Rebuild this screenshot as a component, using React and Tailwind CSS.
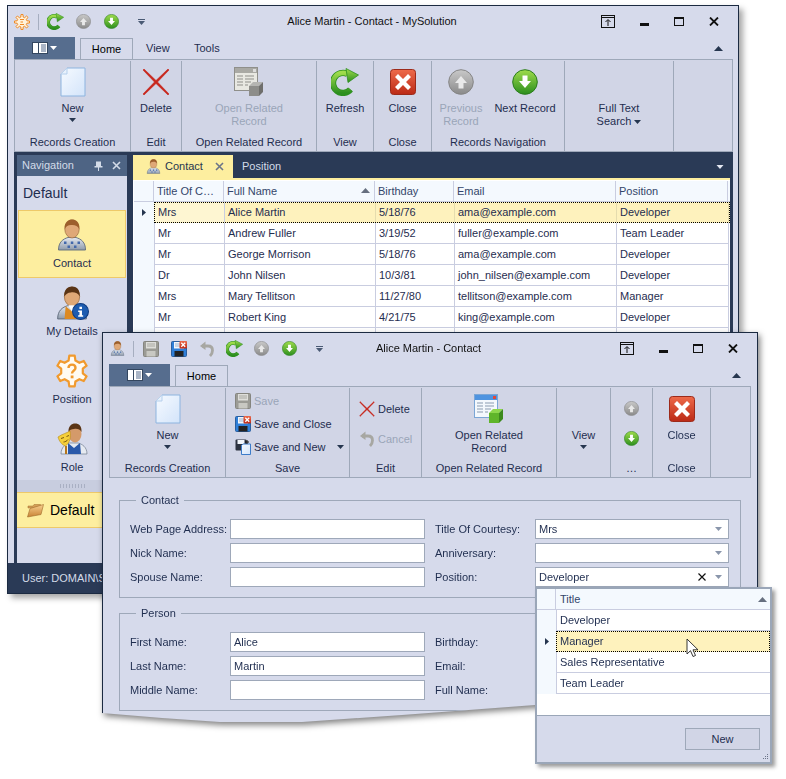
const GRID_COLS = [
  { title: 'Title Of C…', w: 'w-[70px]' },
  { title: 'Full Name', w: 'w-[151px]', sort: true },
  { title: 'Birthday', w: 'w-[79px]' },
  { title: 'Email', w: 'w-[162px]' },
  { title: 'Position', w: 'w-[112px]' },
];

const GRID_ROWS = [
  ['Mrs', 'Alice Martin', '5/18/76', 'ama@example.com', 'Developer'],
  ['Mr', 'Andrew Fuller', '3/19/52', 'fuller@example.com', 'Team Leader'],
  ['Mr', 'George Morrison', '5/18/76', 'ama@example.com', 'Developer'],
  ['Dr', 'John Nilsen', '10/3/81', 'john_nilsen@example.com', 'Developer'],
  ['Mrs', 'Mary Tellitson', '11/27/80', 'tellitson@example.com', 'Manager'],
  ['Mr', 'Robert King', '4/21/75', 'king@example.com', 'Developer'],
  ['Mr', 'Steven Buchanan', '3/4/55', 'buchanan@example.com', 'Manager'],
];

function gearPath(cx, cy, outer, inner, teeth) {
  const pts = [];
  const step = (Math.PI * 2) / teeth;
  for (let i = 0; i < teeth; i++) {
    const a = i * step - Math.PI / 2;
    [[-0.3, inner], [-0.17, outer], [0.17, outer], [0.3, inner]].forEach(([f, r]) => {
      pts.push(`${(cx + Math.cos(a + f * step) * r).toFixed(1)} ${(cy + Math.sin(a + f * step) * r).toFixed(1)}`);
    });
  }
  return 'M' + pts.join('L') + 'Z';
}

function Defs() {
  return (
    <svg className="absolute w-0 h-0">
      <defs>
        <linearGradient id="doc" x1="0" y1="0" x2="1" y2="1"><stop offset="0" stopColor="#f6faff" /><stop offset="1" stopColor="#d3e4fa" /></linearGradient>
        <linearGradient id="green" x1="0" y1="0" x2="0" y2="1"><stop offset="0" stopColor="#9fdc4c" /><stop offset="1" stopColor="#2c8f1e" /></linearGradient>
        <linearGradient id="grey" x1="0" y1="0" x2="0" y2="1"><stop offset="0" stopColor="#c9c9c9" /><stop offset="1" stopColor="#8a8a8a" /></linearGradient>
        <linearGradient id="red" x1="0" y1="0" x2="0" y2="1"><stop offset="0" stopColor="#ee6a4a" /><stop offset="1" stopColor="#bb2a16" /></linearGradient>
        <linearGradient id="suit" x1="0" y1="0" x2="0" y2="1"><stop offset="0" stopColor="#e4e9f1" /><stop offset="1" stopColor="#8f9bab" /></linearGradient>
        <linearGradient id="folder" x1="0" y1="0" x2="0" y2="1"><stop offset="0" stopColor="#f8cf8e" /><stop offset="1" stopColor="#c98436" /></linearGradient>
      </defs>
    </svg>
  );
}

function Caret({ color = '#26364f', className = '', w = 7 }) {
  return (
    <svg width={w} height="4" viewBox="0 0 7 4" className={className}><polygon points="0,0 7,0 3.5,4" fill={color} /></svg>
  );
}

function CaretUp({ color = '#26364f', className = '' }) {
  return (
    <svg width="9" height="5" viewBox="0 0 9 5" className={className}><polygon points="0,5 9,5 4.5,0" fill={color} /></svg>
  );
}

function NewDoc() {
  return (
    <svg width="26" height="30" viewBox="0 0 26 30">
      <path d="M7 1H25V29H1V7Z" fill="url(#doc)" stroke="#8db4df" />
      <path d="M7 1V7H1" fill="#e8f1fc" stroke="#b5cfec" />
    </svg>
  );
}

function RedX({ size = 28 }) {
  return (
    <svg width={size} height={size} viewBox="0 0 28 28">
      <path d="M1 2L2 1L14 12.500L26 1L27 2L15.500 14L27 26L26 27L14 15.500L2 27L1 26L12.500 14Z" fill="#c8261c" stroke="#c8261c" strokeWidth="0.6" />
    </svg>
  );
}

function RelatedIcon({ color }) {
  const head = color ? '#4f94e0' : '#a9a9a4';
  const cube = color ? '#5fb52a' : '#8d8d8a';
  const cubeTop = color ? '#8dd84c' : '#b5b5b2';
  const cubeSide = color ? '#3c8a1c' : '#6f6f6c';
  return (
    <svg width="30" height="30" viewBox="0 0 30 30">
      <rect x="0.5" y="0.5" width="23" height="23" fill={color ? '#f4f8fd' : '#e8e8e2'} stroke={color ? '#7ba6d6' : '#8f8f8a'} />
      <rect x="1" y="1" width="22" height="5" fill={head} />
      <rect x="19" y="2" width="3" height="3" fill={color ? '#e0483a' : '#ddd'} />
      <path d="M3 9H9M11 9H20M3 12H9M11 12H20M3 15H9M11 15H17M3 18H9M11 18H14" stroke={color ? '#8a9bb0' : '#8f8f8a'} />
      <polygon points="15,19 19,15 29,15 25,19" fill={cubeTop} />
      <rect x="15" y="19" width="10" height="10" fill={cube} />
      <polygon points="25,19 29,15 29,25 25,29" fill={cubeSide} />
    </svg>
  );
}

function Refresh({ size = 28 }) {
  return (
    <svg width={size} height={size} viewBox="0 0 28 28">
      <path d="M19.5 21.5A10 10 0 1 1 16.5 6" fill="none" stroke="#2c8f1e" strokeWidth="6.4" />
      <path d="M19.5 21.5A10 10 0 1 1 16.5 6" fill="none" stroke="url(#green)" strokeWidth="4.6" />
      <polygon points="15,0.5 27.5,7 17,14.5" fill="url(#green)" stroke="#2c8f1e" strokeWidth="0.8" />
    </svg>
  );
}

function RoundArrow({ up, grey, size = 26 }) {
  return (
    <svg width={size} height={size} viewBox="0 0 26 26">
      <circle cx="13" cy="13" r="12.3" fill={grey ? 'url(#grey)' : 'url(#green)'} stroke={grey ? '#858585' : '#2b7d1d'} />
      <g transform={up ? 'rotate(180 13 13)' : undefined}>
        <path d="M10.5 6.5H15.5V12H19L13 19L7 12H10.5Z" fill={grey ? '#e9e9e9' : '#fff'} />
      </g>
    </svg>
  );
}

function CloseBox({ size = 26 }) {
  return (
    <svg width={size} height={size} viewBox="0 0 26 26">
      <rect x="0.5" y="0.5" width="25" height="25" rx="3" fill="url(#red)" stroke="#9c2a1a" />
      <path d="M5 8L8 5L13 10L18 5L21 8L16 13L21 18L18 21L13 16L8 21L5 18L10 13Z" fill="#fff" />
    </svg>
  );
}

function AppGear() {
  return (
    <svg width="16" height="16" viewBox="0 0 16 16">
      <path d={gearPath(8, 8, 7.6, 5, 8)} fill="#fff3dd" stroke="#f08a24" />
      <path d="M6 5.5H10M9 8H6.5M6 10.5H10" stroke="#f08a24" />
    </svg>
  );
}

function PositionGear() {
  return (
    <svg width="32" height="34" viewBox="0 0 32 34">
      <path d={gearPath(16, 17, 15.5, 11, 6)} fill="#fffbf2" stroke="#f19a2e" strokeWidth="2.2" strokeLinejoin="round" />
      <path d="M12.5 14C12.5 9.5 19.5 9.5 19.5 14C19.5 16.5 16 16.5 16 19.5" fill="none" stroke="#f19a2e" strokeWidth="2.4" />
      <rect x="14.7" y="21.5" width="2.8" height="2.8" fill="#f19a2e" />
    </svg>
  );
}

function PersonBase({ size, suit = 'url(#suit)', hair = '#9c5f2c', children }) {
  return (
    <svg width={size} height={size} viewBox="0 0 32 32">
      <path d="M2.500 31C2.500 23 7 20 12 18.500H20C25 20 29.500 23 29.500 31Z" fill={suit} stroke="#5f6b7c" strokeWidth="0.9" />
      <ellipse cx="16" cy="10" rx="7.200" ry="9" fill="#dfa877" stroke="#9c6a3c" strokeWidth="0.7" />
      <path d="M8.800 10C8 3 12.500 0.500 16 0.500C20 0.500 24 3 23.200 10C22 6.500 18 5.500 15 6C12 6 10 7.500 8.800 10Z" fill={hair} />
      {children}
    </svg>
  );
}

function ContactIcon({ size = 32 }) {
  return (
    <PersonBase size={size}>
      <path d="M8 22.500h2.500v2.500H8zM14.800 22.500h2.500v2.500h-2.500zM21.500 22.500h2.500v2.500H21.500zM11.500 26.500h2.500v2.500h-2.500zM18 26.500h2.500v2.500H18z" fill="#4268aa" />
    </PersonBase>
  );
}

function DetailsIcon() {
  return (
    <PersonBase size={34} hair="#5a3415">
      <path d="M10 19L16 24L22 19L23 31H9Z" fill="#dc8a22" />
      <path d="M12.500 18L16 24L19.500 18Z" fill="#fff" />
      <circle cx="24" cy="24" r="7.500" fill="#1d5cb0" stroke="#0f3c80" />
      <rect x="23" y="19.500" width="2.400" height="2.200" fill="#fff" />
      <path d="M21.800 23H25.400V27.500H26.500V29H21.800V27.500H23V24.500H21.800Z" fill="#fff" />
    </PersonBase>
  );
}

function RoleIcon() {
  return (
    <svg width="32" height="34" viewBox="0 0 32 34">
      <path d="M5 32C5 25 10 22 13 21H22C26 22 31 25 31 32Z" fill="#e6eaf1" stroke="#6f7b8c" strokeWidth="0.7" />
      <path d="M12 21L18 26L24 21L25 32H12Z" fill="#2a59aa" />
      <ellipse cx="19" cy="12" rx="6.500" ry="8.500" fill="#d49a6a" />
      <path d="M12.500 10C12 4 16 1.500 19 1.500C23 1.500 26 4 25.500 10C24 7 21 6.500 18 7C15.500 7 13.500 8 12.500 10Z" fill="#5a3415" />
      <path d="M2 15C6 12 11 11 14 9C15 15 14 21 9.500 24C6 23 3 19 2 15Z" fill="#f5cf3a" stroke="#b58a16" strokeWidth="0.6" />
      <path d="M5 16.500L8 15.500M10.500 14.500L13 13.500M7.500 20C9 20 11 19 12 17.500" stroke="#7a5a10" fill="none" />
      <rect x="9" y="24" width="2" height="8" fill="#b5761c" />
    </svg>
  );
}

function Folder() {
  return (
    <svg width="17" height="16" viewBox="0 0 17 16">
      <path d="M1 4H6L7 2.500H13.500V5L1 6Z" fill="#d5a058" stroke="#a06a28" strokeWidth="0.5" />
      <path d="M0.500 15L3 6.500L16.500 2.500L14 12.500Z" fill="url(#folder)" stroke="#a06a28" strokeWidth="0.6" />
    </svg>
  );
}

function Floppy({ tone = 'blue', children }) {
  const body = tone === 'blue' ? '#2f7fd8' : tone === 'dark' ? '#2d3340' : '#9b9b95';
  return (
    <svg width="16" height="16" viewBox="0 0 16 16">
      <rect x="0.500" y="0.500" width="15" height="15" rx="1" fill={body} stroke={tone === 'grey' ? '#85857f' : '#2a5f9f'} />
      <rect x="3" y="1" width="10" height="6.500" fill={tone === 'grey' ? '#dededa' : '#f2f6fb'} />
      <path d="M4 3H12M4 5H12" stroke={tone === 'grey' ? '#a8a8a2' : '#9bb3cf'} />
      <rect x="3.500" y="10" width="9" height="5.500" fill={tone === 'grey' ? '#c8c8c2' : '#222'} />
      {children}
    </svg>
  );
}

function SaveClose() {
  return (
    <Floppy>
      <rect x="8.500" y="0" width="7.500" height="7.500" rx="1" fill="url(#red)" />
      <path d="M10.300 1.800L14.200 5.700M14.200 1.800L10.300 5.700" stroke="#fff" strokeWidth="1.300" />
    </Floppy>
  );
}

function SaveNew() {
  return (
    <svg width="16" height="16" viewBox="0 0 16 16">
      <rect x="0.500" y="0.500" width="11" height="11" rx="1" fill="#2d3340" />
      <rect x="2.500" y="1" width="7" height="4" fill="#f2f6fb" />
      <path d="M8 5H15.500V15.500H6.500V6.500Z" fill="url(#doc)" stroke="#3d7cc9" />
      <path d="M12 1V5M10 3H14" stroke="#111" />
    </svg>
  );
}

function Undo({ size = 16 }) {
  return (
    <svg width={size} height={size} viewBox="0 0 16 16">
      <path d="M3 5H9C12 5 13.500 7 13.500 9.500C13.500 11.500 12.500 13.500 11 15" fill="none" stroke="#a7a7a2" strokeWidth="2.800" />
      <polygon points="6.500,0.500 1,5 6.500,9" fill="#a7a7a2" />
    </svg>
  );
}

function PinBox() {
  return (
    <svg width="14" height="13" viewBox="0 0 14 13">
      <rect x="0.500" y="0.500" width="13" height="12" fill="none" stroke="#111" />
      <path d="M1 2.500H13" stroke="#111" />
      <path d="M7 11V5M4.500 7L7 4.500L9.500 7" fill="none" stroke="#111" />
    </svg>
  );
}

function WindowButtons({ gapClass }) {
  return (
    <div className={`flex items-center ${gapClass}`}>
      <PinBox />
      <div className="w-[9px] h-[3px] bg-[#111] mt-[5px]" />
      <div className="w-[10px] h-[9px] border border-t-2 border-[#111]" />
      <svg width="10" height="9" viewBox="0 0 10 9"><path d="M1 0.500L9 8.500M9 0.500L1 8.500" stroke="#111" strokeWidth="1.800" /></svg>
    </div>
  );
}

function FileButton() {
  return (
    <div className="w-[61px] h-[22px] bg-[#566d8e] flex items-center justify-center gap-[2px]">
      <svg width="16" height="12" viewBox="0 0 16 12">
        <rect x="0.500" y="0.500" width="15" height="11" fill="#fff" stroke="#33465f" />
        <path d="M6.500 0.500V11.500" stroke="#33465f" />
        <path d="M9 3H14M9 5H14M9 7H14M9 9H14" stroke="#566d8e" />
      </svg>
      <Caret color="#fff" />
    </div>
  );
}

function Tab({ w, children }) {
  return (
    <div className={`${w} h-[22px] -mb-px z-10 border border-b-0 border-[#9ea8b9] bg-[#d6daeb] flex items-center justify-center text-black`}>{children}</div>
  );
}

function Group({ w, caption, children, last }) {
  return (
    <div className={`${w} h-full flex flex-col items-center my-px ${last ? '' : 'border-r border-[#9ea8b9]'}`}>
      <div className="flex-1 w-full flex items-start justify-center">{children}</div>
      <div className="h-[15px] mb-[2px] leading-[15px] whitespace-nowrap">{caption}</div>
    </div>
  );
}

function BigButton({ icon, lines, disabled, caret, w }) {
  return (
    <div className={`${w || ''} pt-[6px] flex flex-col items-center ${disabled ? 'text-[#9aa5b8]' : ''}`}>
      <div className="h-[30px] flex items-center justify-center">{icon}</div>
      <div className="mt-[5px] leading-[13px] text-center whitespace-nowrap">
        {lines.map((l) => <div key={l}>{l}</div>)}
      </div>
      {caret && <Caret className="mt-[3px]" />}
    </div>
  );
}

function SmallRow({ icon, label, disabled, caret, gap = 'gap-[3px]' }) {
  return (
    <div className={`flex items-center ${gap} ${disabled ? 'text-[#9aa5b8]' : ''} whitespace-nowrap h-[16px]`}>
      {icon}
      <span>{label}</span>
      {caret && <Caret className="ml-[8px]" />}
    </div>
  );
}

function MainRibbon() {
  return (
    <div className="h-[93px] ml-[6px] mr-[5px] border border-[#9ea8b9] bg-[#d1d5e6] flex">
      <Group w="w-[116px]" caption="Records Creation">
        <BigButton icon={<NewDoc />} lines={['New']} caret />
      </Group>
      <Group w="w-[51px]" caption="Edit">
        <BigButton icon={<RedX />} lines={['Delete']} />
      </Group>
      <Group w="w-[135px]" caption="Open Related Record">
        <BigButton icon={<RelatedIcon />} lines={['Open Related', 'Record']} disabled />
      </Group>
      <Group w="w-[57px]" caption="View">
        <BigButton icon={<Refresh />} lines={['Refresh']} />
      </Group>
      <Group w="w-[58px]" caption="Close">
        <BigButton icon={<CloseBox />} lines={['Close']} />
      </Group>
      <Group w="w-[133px]" caption="Records Navigation">
        <div className="flex gap-[12px]">
          <BigButton icon={<RoundArrow up grey />} lines={['Previous', 'Record']} disabled w="w-[42px]" />
          <BigButton icon={<RoundArrow />} lines={['Next Record']} w="w-[62px]" />
        </div>
      </Group>
      <Group w="w-[109px]" caption="">
        <div className="pt-[41px] leading-[13px] text-center">
          <div>Full Text</div>
          <div className="flex items-center gap-[3px]">Search <Caret /></div>
        </div>
      </Group>
      <Group w="flex-1" caption="" last />
    </div>
  );
}

function FormRibbon() {
  return (
    <div className="h-[92px] ml-[6px] mr-[6px] border border-[#9ea8b9] bg-[#d1d5e6] flex">
      <Group w="w-[116px]" caption="Records Creation">
        <BigButton icon={<NewDoc />} lines={['New']} caret />
      </Group>
      <Group w="w-[124px]" caption="Save">
        <div className="pt-[5px] flex flex-col gap-[7px] w-full pl-[9px]">
          <SmallRow icon={<Floppy tone="grey" />} label="Save" disabled />
          <SmallRow icon={<SaveClose />} label="Save and Close" />
          <SmallRow icon={<SaveNew />} label="Save and New" caret />
        </div>
      </Group>
      <Group w="w-[72px]" caption="Edit">
        <div className="pt-[13px] flex flex-col gap-[14px] w-full pl-[9px]">
          <SmallRow icon={<RedX size={16} />} label="Delete" />
          <SmallRow icon={<Undo />} label="Cancel" disabled />
        </div>
      </Group>
      <Group w="w-[135px]" caption="Open Related Record">
        <BigButton icon={<RelatedIcon color />} lines={['Open Related', 'Record']} />
      </Group>
      <Group w="w-[54px]" caption="">
        <BigButton icon={<span />} lines={['View']} caret />
      </Group>
      <Group w="w-[42px]" caption="…">
        <div className="pt-[13px] flex flex-col items-center gap-[15px]">
          <RoundArrow up grey size={15} />
          <RoundArrow size={15} />
        </div>
      </Group>
      <Group w="w-[58px]" caption="Close">
        <BigButton icon={<CloseBox />} lines={['Close']} />
      </Group>
      <Group w="flex-1" caption="" last />
    </div>
  );
}

function NavItem({ icon, label, active, h = 'h-[68px]' }) {
  return (
    <div className={`${h} flex flex-col items-center ${active ? 'mx-px border border-[#eec969] bg-[#fdee9f] pt-[7px]' : 'pt-[8px]'}`}>
      <div className="h-[34px] flex items-center justify-center">{icon}</div>
      <div className={active ? 'mt-[4px]' : 'mt-[4px]'}>{label}</div>
    </div>
  );
}

function NavPanel() {
  return (
    <div className="w-[110px] flex flex-col bg-[#d6daeb]">
      <div className="h-[21px] bg-[#4e6484] text-[#d3dbe8] flex items-center pl-[5px] pr-[6px] shrink-0">
        <span className="flex-1">Navigation</span>
        <svg width="9" height="10" viewBox="0 0 9 10" className="mr-[9px]"><path d="M2 0.500H7V5H8.500V6.500H5V10H4V6.500H0.500V5H2Z" fill="#d3dbe8" /></svg>
        <svg width="9" height="9" viewBox="0 0 9 9"><path d="M1 1L8 8M8 1L1 8" stroke="#d3dbe8" strokeWidth="1.600" /></svg>
      </div>
      <div className="h-[34px] pl-[6px] flex items-center text-[14px] shrink-0">Default</div>
      <NavItem icon={<ContactIcon />} label="Contact" active />
      <NavItem icon={<DetailsIcon />} label="My Details" />
      <NavItem icon={<PositionGear />} label="Position" />
      <NavItem icon={<RoleIcon />} label="Role" h="h-[66px]" />
      <div className="h-[12px] bg-[#c8cddf] flex items-center justify-center">
        <div className="w-[26px] h-[4px] bg-[radial-gradient(#8a93a8_0.7px,transparent_0.8px)] bg-[length:3px_2px]" />
      </div>
      <div className="h-[36px] border-y border-[#eec969] bg-[#fdee9f] flex items-center gap-[6px] pl-[10px] text-[14px] text-black">
        <Folder />
        Default
      </div>
    </div>
  );
}

function CellText({ children, w, className = '' }) {
  return (
    <div className={`${w} h-full border-r border-[#c9cde0] pl-[3px] flex items-center whitespace-nowrap overflow-hidden ${className}`}>{children}</div>
  );
}

function ContactGrid() {
  return (
    <div className="flex-1 mr-[3px] border-t-2 border-[#fdee9f] bg-white pt-[1px] pl-px overflow-hidden">
      <div className="flex h-[21px] bg-[#f4f9fe] border-b border-[#c9cde0] text-[#33466a]">
        <div className="w-[20px] border-r border-[#c9cde0]" />
        {GRID_COLS.map((c) => (
          <CellText key={c.title} w={c.w} className="relative">
            {c.title}
            {c.sort && <CaretUp color="#666f7f" className="absolute right-[4px] top-[7px]" />}
          </CellText>
        ))}
      </div>
      {GRID_ROWS.map((row, i) => (
        <div key={row[1]} className="flex h-[21px]">
          <div className="w-[20px] bg-[#f4f9fe] flex items-center justify-center">
            {i === 0 && <svg width="4" height="7" viewBox="0 0 4 7"><polygon points="0,0 4,3.500 0,7" fill="#26364f" /></svg>}
          </div>
          <div className={`flex ${i === 0 ? 'border border-dotted border-black bg-[#fef2bd] -mr-px' : 'border-b border-l border-[#c9cde0]'}`}>
            {row.map((v, j) => (
              <CellText key={j} w={GRID_COLS[j].w} className={i === 0 && j === 0 ? 'bg-[#fef6d2]' : i === 0 ? 'border-[#e5dcae]' : ''}>{v}</CellText>
            ))}
          </div>
        </div>
      ))}
    </div>
  );
}

function MainWindow() {
  return (
    <div className="absolute left-[7px] top-[5px] w-[732px] h-[589px] border border-[#1b2a41] bg-[#d6daeb] flex flex-col shadow-[4px_4px_6px_rgba(0,0,0,0.35)]">
      <div className="h-[31px] flex items-center shrink-0 relative">
        <div className="ml-[6px]"><AppGear /></div>
        <div className="ml-[8px] w-px h-[16px] bg-[#a6aec0]" />
        <div className="ml-[8px]"><Refresh size={17} /></div>
        <div className="ml-[12px]"><RoundArrow up grey size={15} /></div>
        <div className="ml-[13px]"><RoundArrow size={15} /></div>
        <div className="ml-[19px] flex flex-col gap-px items-center">
          <div className="w-[7px] h-px bg-[#4a5a74]" />
          <Caret color="#4a5a74" />
        </div>
        <div className="flex-1 text-center text-[#111] -ml-[2px]">Alice Martin - Contact - MySolution</div>
        <div className="mr-[19px]"><WindowButtons gapClass="gap-[25px]" /></div>
      </div>
      <div className="h-[22px] ml-[6px] mr-[5px] flex items-end shrink-0">
        <FileButton />
        <div className="ml-[5px]"><Tab w="w-[53px]">Home</Tab></div>
        <div className="ml-[13px] w-[22px] self-center text-center">View</div>
        <div className="ml-[26px] self-center">Tools</div>
        <CaretUp color="#26364f" className="ml-auto mr-[10px] self-center" />
      </div>
      <MainRibbon />
      <div className="flex-1 ml-[6px] mr-[5px] bg-[#2a3a56] pt-[3px] pl-[3px] flex gap-[6px] min-h-0">
        <NavPanel />
        <div className="flex-1 flex flex-col min-w-0">
          <div className="h-[23px] flex items-center shrink-0 text-[#d3dbe8]">
            <div className="w-[100px] h-full bg-[#fdee9f] text-[#26364f] flex items-center pl-[13px] gap-[4px]">
              <ContactIcon size={15} />
              <span className="flex-1">Contact</span>
              <svg width="9" height="9" viewBox="0 0 9 9" className="mr-[9px]"><path d="M1 1L8 8M8 1L1 8" stroke="#6b7488" strokeWidth="1.600" /></svg>
            </div>
            <span className="ml-[9px] flex-1">Position</span>
            <Caret color="#e4e8f2" w={8} className="mr-[9px]" />
          </div>
          <ContactGrid />
        </div>
      </div>
      <div className="h-[30px] bg-[#2a3a56] text-[#d3dbe8] flex items-center pl-[14px] shrink-0">User: DOMAIN\Sam</div>
    </div>
  );
}

function Input({ value, combo, clear }) {
  return (
    <div className={`${combo ? 'w-[194px]' : 'w-[195px]'} h-[20px] border border-[#9ea8b9] bg-white flex items-center pl-[3px] pr-[6px] text-[#1f2d4f]`}>
      <span className="flex-1">{value}</span>
      {clear && <svg width="8" height="8" viewBox="0 0 8 8" className="mr-[9px]"><path d="M0.500 0.500L7.500 7.500M7.500 0.500L0.500 7.500" stroke="#111" strokeWidth="1.200" /></svg>}
      {combo && <Caret color="#8a96ab" />}
    </div>
  );
}

function FormRow({ left, leftValue, right, rightValue, combo, clear }) {
  return (
    <div className="flex items-center h-[20px]">
      <div className="w-[100px] whitespace-nowrap">{left}</div>
      <Input value={leftValue} />
      <div className="w-[100px] ml-[10px] whitespace-nowrap">{right}</div>
      <Input value={rightValue} combo={combo} clear={clear} />
    </div>
  );
}

function GroupBox({ title, children }) {
  return (
    <fieldset className="border border-[#9ea8b9] pl-[10px] pr-[10px] pt-[11px] pb-[10px] flex flex-col gap-[4px]">
      <legend className="ml-[6px] px-[5px] leading-[15px]">{title}</legend>
      <div className="flex flex-col gap-[4px]">{children}</div>
    </fieldset>
  );
}

function ContactWindow() {
  return (
    <div className="absolute left-[102px] top-[332px] drop-shadow-[2px_3px_3px_rgba(0,0,0,0.5)]">
      <div className="w-[656px] h-[390px] border-x border-t border-[#1b2a41] bg-[#d6daeb] flex flex-col overflow-hidden [clip-path:polygon(0_0,656px_0,656px_371px,433px_373px,300px_383px,200px_390px,118px_390px,60px_386px,0_381px)]">
        <div className="h-[31px] flex items-center shrink-0">
          <div className="ml-[7px]"><ContactIcon size={15} /></div>
          <div className="ml-[8px] w-px h-[16px] bg-[#a6aec0]" />
          <div className="ml-[9px]"><Floppy tone="grey" /></div>
          <div className="ml-[12px]"><SaveClose /></div>
          <div className="ml-[12px]"><Undo /></div>
          <div className="ml-[11px]"><Refresh size={17} /></div>
          <div className="ml-[11px]"><RoundArrow up grey size={15} /></div>
          <div className="ml-[13px]"><RoundArrow size={15} /></div>
          <div className="ml-[19px] flex flex-col gap-px items-center">
            <div className="w-[7px] h-px bg-[#4a5a74]" />
            <Caret color="#4a5a74" />
          </div>
          <div className="flex-1 text-center text-[#111] -ml-[86px]">Alice Martin - Contact</div>
          <div className="mr-[19px]"><WindowButtons gapClass="gap-[25px]" /></div>
        </div>
        <div className="h-[22px] ml-[6px] mr-[6px] flex items-end shrink-0">
          <FileButton />
          <div className="ml-[5px]"><Tab w="w-[53px]">Home</Tab></div>
          <CaretUp color="#26364f" className="ml-auto mr-[10px] self-center" />
        </div>
        <FormRibbon />
        <div className="px-[16px] pt-[15px] flex flex-col gap-[8px]">
          <GroupBox title="Contact">
            <FormRow left="Web Page Address:" right="Title Of Courtesy:" rightValue="Mrs" combo />
            <FormRow left="Nick Name:" right="Anniversary:" combo />
            <FormRow left="Spouse Name:" right="Position:" rightValue="Developer" combo clear />
          </GroupBox>
          <GroupBox title="Person">
            <FormRow left="First Name:" leftValue="Alice" right="Birthday:" combo />
            <FormRow left="Last Name:" leftValue="Martin" right="Email:" />
            <FormRow left="Middle Name:" right="Full Name:" />
          </GroupBox>
        </div>
      </div>
    </div>
  );
}

function LookupPopup() {
  const rows = ['Developer', 'Manager', 'Sales Representative', 'Team Leader'];
  return (
    <div className="absolute left-[535px] top-[587px] w-[237px] h-[177px] border-2 border-[#9aa6b8] bg-white flex flex-col shadow-[3px_3px_4px_rgba(0,0,0,0.4)]">
      <div className="flex h-[21px] bg-[#f4f9fe] border-b border-[#c9cde0] text-[#33466a] shrink-0">
        <div className="w-[19px] border-r border-[#c9cde0]" />
        <div className="flex-1 pl-[4px] flex items-center">Title</div>
        <CaretUp color="#666f7f" className="self-center mr-[3px]" />
      </div>
      <div className="flex-1">
        {rows.map((r, i) => (
          <div key={r} className="flex h-[21px]">
            <div className="w-[19px] bg-[#f4f9fe] flex items-center justify-center">
              {i === 1 && <svg width="4" height="7" viewBox="0 0 4 7"><polygon points="0,0 4,3.500 0,7" fill="#26364f" /></svg>}
            </div>
            <div className={`flex-1 flex items-center pl-[3px] ${i === 1 ? 'border border-dotted border-black bg-[#fef2bd]' : 'border-b border-l border-[#c9cde0]'}`}>{r}</div>
          </div>
        ))}
      </div>
      <div className="relative h-[47px] shrink-0 border-t border-[#9aa6b8] bg-[#d6daeb] flex items-start justify-end pt-[12px] pr-[10px]">
        <div className="w-[75px] h-[22px] border border-[#9ea8b9] bg-[#d1d5e6] flex items-center justify-center">New</div>
        <svg width="8" height="8" viewBox="0 0 8 8" className="absolute right-[1px] bottom-[1px]">
          <path d="M6 1h1v1H6zM4 3h1v1H4zM6 3h1v1H6zM2 5h1v1H2zM4 5h1v1H4zM6 5h1v1H6z" fill="#6b7488" />
        </svg>
      </div>
      <svg width="13" height="20" viewBox="0 0 13 20" className="absolute left-[149px] top-[49px]">
        <path d="M1 1V16L4.500 12.700L7 18.500L9.500 17.500L7 11.800H12Z" fill="#fff" stroke="#222" strokeWidth="0.900" strokeLinejoin="round" />
      </svg>
    </div>
  );
}

export default function App() {
  return (
    <div className="relative w-[786px] h-[779px] overflow-hidden bg-white text-[11px] leading-[15px] text-[#1f2d4f] font-['Liberation_Sans',Arial,sans-serif]">
      <Defs />
      <MainWindow />
      <ContactWindow />
      <LookupPopup />
    </div>
  );
}
